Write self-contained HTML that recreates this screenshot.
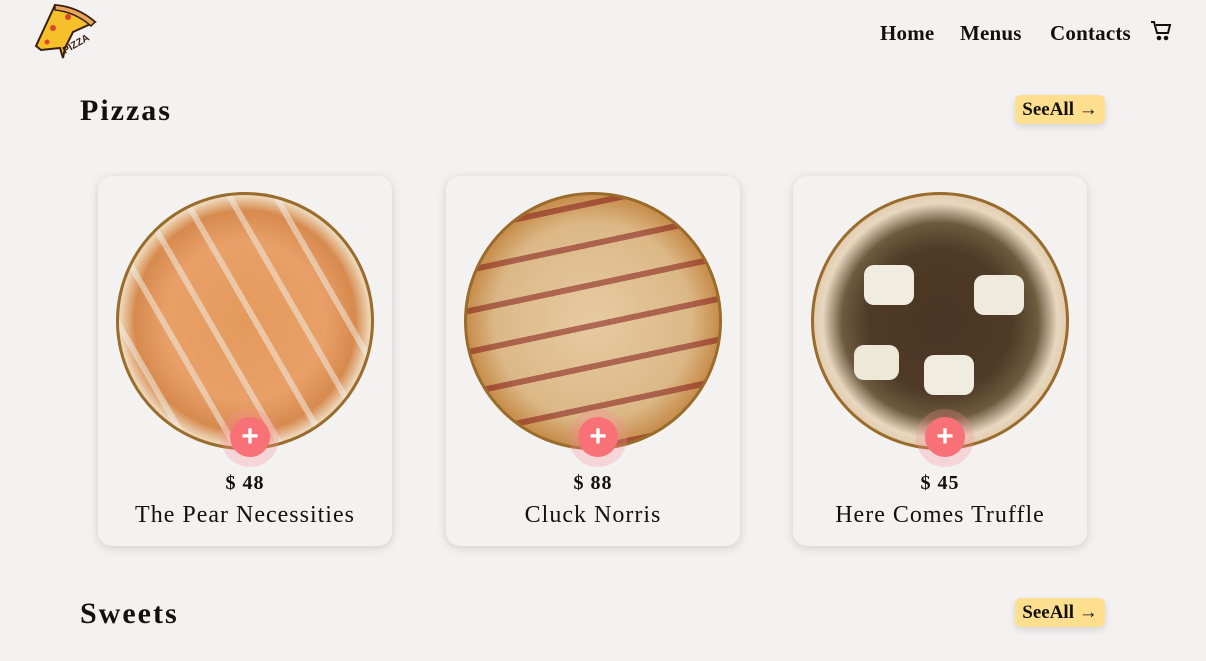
<!DOCTYPE html>
<html><head><meta charset="utf-8"><style>
*{margin:0;padding:0;box-sizing:border-box}
body{width:1206px;height:661px;overflow:hidden;background:#f3f2f1;font-family:"Liberation Serif","DejaVu Serif",serif;color:#111;position:relative}
.nav{position:absolute;top:21px;font-size:21px;font-weight:bold;letter-spacing:.2px}
h2{position:absolute;left:80px;font-size:30px;font-weight:bold;letter-spacing:2px}
.see{position:absolute;left:1015px;width:90px;height:29px;background:#fedf8f;border-radius:6px;font-size:19px;font-weight:bold;line-height:29px;text-align:center;box-shadow:0 3px 8px rgba(0,0,0,.12)}
.card{position:absolute;top:176px;width:294px;height:370px;background:#f3f2f1;border-radius:14px;box-shadow:0 2px 10px rgba(0,0,0,.15)}
.pz{position:absolute;left:18px;top:16px;width:258px;height:258px;border-radius:50%;border:3px solid #9a6c2c;overflow:hidden}
.halo{position:absolute;left:123px;top:233px;width:58px;height:58px;border-radius:50%;background:rgba(250,140,150,.28)}
.plus{position:absolute;left:132px;top:241px;width:40px;height:40px;border-radius:50%;background:#f87177;color:#fff;font:bold 30px/40px "Liberation Sans",sans-serif;text-align:center}
.price{position:absolute;top:296px;width:100%;text-align:center;font-size:20px;font-weight:bold;letter-spacing:1px}
.name{position:absolute;top:326px;width:100%;text-align:center;font-size:24px;letter-spacing:1px}
</style></head><body>
<svg style="position:absolute;left:33px;top:2px" width="64" height="58" viewBox="0 0 64 58">
<path d="M22 3 Q45 5 62 20 L40 30 L32 46 L30 56 L27 46 L8 48 L3 44 Z" fill="#f6c02a" stroke="#3a1f10" stroke-width="2"/>
<path d="M22 3 Q45 5 62 20 L58 24 Q42 10 22 8Z" fill="#e8a65c" stroke="#3a1f10" stroke-width="1.5"/>
<circle cx="35" cy="15" r="3" fill="#d9472b"/><circle cx="20" cy="26" r="3" fill="#d9472b"/><circle cx="14" cy="40" r="2.5" fill="#d9472b"/>
<text x="32" y="52" font-family="Liberation Sans" font-weight="bold" font-size="10" fill="#3a1f10" transform="rotate(-30 32 52)">PIZZA</text>
</svg>
<div class="nav" style="left:880px">Home</div>
<div class="nav" style="left:960px">Menus</div>
<div class="nav" style="left:1050px">Contacts</div>
<svg style="position:absolute;left:1150px;top:21px" width="22" height="20" viewBox="0 0 22 20" fill="none" stroke="#111" stroke-width="2"><path d="M1 1h3l3 11h11l2-8H6"/><circle cx="9" cy="17" r="1.3" fill="#111"/><circle cx="16" cy="17" r="1.3" fill="#111"/></svg>
<h2 style="top:94px">Pizzas</h2>
<div class="see" style="top:95px">SeeAll →</div>
<h2 style="top:597px">Sweets</h2>
<div class="see" style="top:598px">SeeAll →</div>

<div class="card" style="left:98px"><div class="pz" style="background:radial-gradient(circle at 50% 50%,#e59a5c 0,#e8a068 45%,#d78a4e 62%,#edd6b8 70%,#c99a6a 85%,#6b4a2a 100%)">
<div style="position:absolute;inset:0;background:repeating-linear-gradient(60deg,transparent 0 18px,rgba(240,235,225,.55) 18px 24px,transparent 24px 40px)"></div></div>
<div class="halo"></div><div class="plus">+</div><div class="price">$ 48</div><div class="name">The Pear Necessities</div></div>

<div class="card" style="left:446px"><div class="pz" style="background:radial-gradient(circle,#e6cba0 0,#dcb887 55%,#c88f4e 70%,#d9a865 82%,#8a5a30 100%)">
<div style="position:absolute;inset:0;background:repeating-linear-gradient(-12deg,transparent 0 22px,rgba(130,25,25,.55) 22px 28px,transparent 28px 40px)"></div></div>
<div class="halo"></div><div class="plus">+</div><div class="price">$ 88</div><div class="name">Cluck Norris</div></div>

<div class="card" style="left:793px"><div class="pz" style="background:radial-gradient(circle,#4a3524 0,#4e3a26 40%,#6e5a3e 55%,#e8d8c0 66%,#d8b892 80%,#b58a58 100%)">
<div style="position:absolute;left:50px;top:70px;width:50px;height:40px;background:#f0ece0;border-radius:10px"></div>
<div style="position:absolute;left:160px;top:80px;width:50px;height:40px;background:#efeadc;border-radius:10px"></div>
<div style="position:absolute;left:110px;top:160px;width:50px;height:40px;background:#f0ece0;border-radius:10px"></div>
<div style="position:absolute;left:40px;top:150px;width:45px;height:35px;background:#eee8d8;border-radius:10px"></div></div>
<div class="halo"></div><div class="plus">+</div><div class="price">$ 45</div><div class="name">Here Comes Truffle</div></div>
</body></html>
